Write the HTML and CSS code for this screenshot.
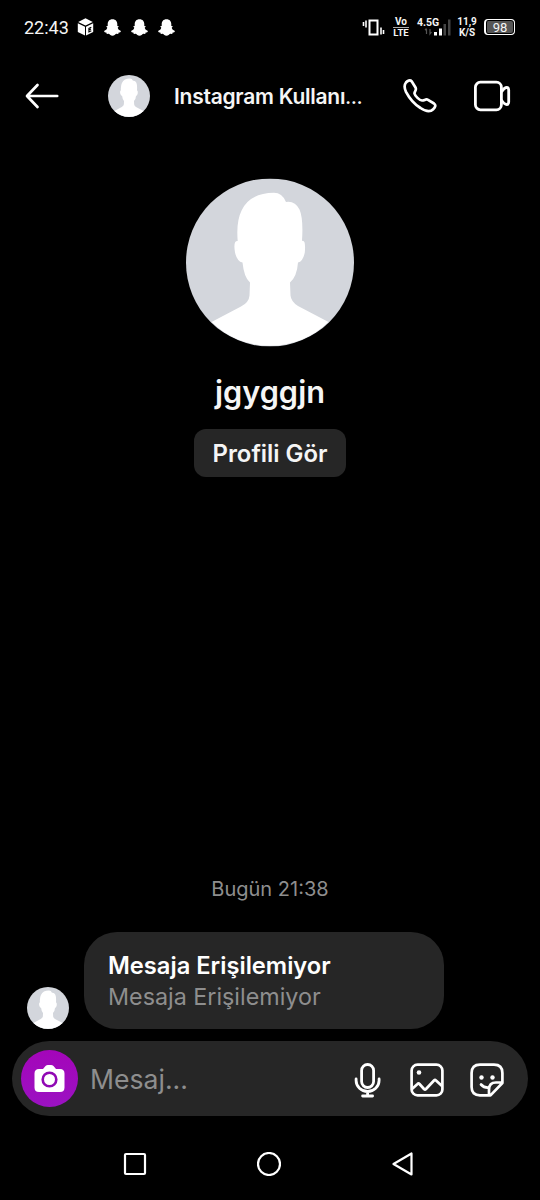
FILE: index.html
```html
<!DOCTYPE html>
<html lang="tr">
<head>
<meta charset="utf-8">
<title>Mesajlar</title>
<link rel="stylesheet" href="styles.css">
</head>
<body>
<svg class="defs" width="0" height="0">
  <symbol id="avatar" viewBox="0 0 168 168">
    <circle cx="84" cy="84" r="84" fill="#d3d6dc"/>
    <path fill="#fff" d="M25.500 143.600 55 128Q63 124 63.500 117L64 104Q58 99 56.500 84Q51 83 49 74Q47 62 51.700 62.500Q50 43 55.700 31.700Q64 14.500 88 14.300Q96 14.300 100 23.400Q109 22 113.500 31Q117.500 40 116 62.500Q120 61 118.800 74Q117 83 112 84Q111 98 104 104L104.500 117Q105 123 112 127.500L142.500 143.600A84 84 0 0 1 25.500 143.600Z"/>
  </symbol>
  <symbol id="ghost" viewBox="0 0 17 17">
    <path fill="#fff" d="M8.500.2C11.800.2 13.300 2.500 13.300 5v2l1.600.2-1.200 1.600c.4 1.600 1.400 2.500 3.200 3.100-.1 1.100-1 1.500-2.200 1.700l-.5 1.300-2-.1c-1 .5-1.900 1.900-3.700 1.900s-2.700-1.400-3.700-1.900l-2 .1-.5-1.300C1.100 13.400.2 13 .1 11.900c1.800-.6 2.800-1.500 3.200-3.100L2.100 7.200 3.700 7V5C3.700 2.500 5.200.2 8.500.2z"/>
  </symbol>
</svg>
<div class="phone">
  <div class="status">
    <span class="clock">22:43</span>
    <svg class="cube" width="17" height="18" viewBox="0 0 17 18"><path fill="#fff" d="M8.500.3 15.800 4 8.500 7.600 1.200 4zM.8 5.200 8 8.800V17.500L.8 14zM16.200 5.200 9 8.800V17.500l7.200-3.500z"/><path d="M14.300 9.300l-2.400 1.100v3.500l2.400-1.200M12 12l2-1" fill="none" stroke="#000" stroke-width="1.100"/></svg>
    <svg class="ghost" width="17" height="17"><use href="#ghost"/></svg>
    <svg class="ghost" width="17" height="17"><use href="#ghost"/></svg>
    <svg class="ghost" width="17" height="17"><use href="#ghost"/></svg>
    <div class="system">
      <svg width="23" height="17" viewBox="0 0 23 17"><path d="M7.500 1.500h8v14h-8z" fill="none" stroke="#fff" stroke-width="2"/><path d="M1.500 3v4M4 1.500v7M19 8.500v7M21.500 11v4" stroke="#fff" stroke-width="1.600"/></svg>
      <div class="stack volte"><span>Vo</span><span class="lte">LTE</span></div>
      <div class="signal">
        <span>4.5G</span>
        <svg width="35" height="18" viewBox="0 0 35 18"><path d="M10.500 11v5m-1.500-4 1.500-1.500M14 11v5l1.500-2" stroke="#555" stroke-width="1.200" fill="none"/><path d="M18 14h3v3.500h-3zM23 10.500h3v7h-3z" fill="#fff"/><path d="M27.500 6h2.500v11.500h-2.500zM32 1.500h2.500v16H32z" fill="#444"/></svg>
      </div>
      <div class="stack speed"><span>11,9</span><span>K/S</span></div>
      <div class="battery"><span>98</span></div>
    </div>
  </div>

  <header class="header">
    <svg class="back" width="36" height="26" viewBox="0 0 36 26" fill="none" stroke="#fff" stroke-width="2.700" stroke-linecap="round" stroke-linejoin="round"><path d="M13.500 2 3 13l10.500 11M3.500 13H33.200"/></svg>
    <svg class="avatar-small" width="42" height="42"><use href="#avatar"/></svg>
    <h1 class="title"><span>Instagram Kullanı</span><span class="dots">…</span></h1>
    <svg class="call" width="36" height="36" viewBox="0 0 36 36" fill="none" stroke="#fff" stroke-width="2.700" stroke-linejoin="round"><path d="M4 4.500C5.500 2.800 8 1.500 9.800 3.500L13.500 9.500C15 12 12.300 13.300 12.500 15.500C13 18 17.500 22.300 20 22.500C22.500 22.800 23.600 20.400 26 21.800L32 25.500C34.400 27.200 33 29.500 31.200 31.200C28.500 34 23.500 33.400 18.500 30C12.500 26.200 7.500 20.500 4 13.800C2.200 10 2 7 4 4.500Z"/></svg>
    <svg class="video" width="38" height="32" viewBox="0 0 38 32" fill="none" stroke="#fff" stroke-width="2.800" stroke-linejoin="round"><rect x="2.400" y="2.200" width="26" height="27.600" rx="5"/><path d="M28.400 12C30 9.500 31.600 7.500 33.800 7.500Q35.700 7.500 35.700 10v12Q35.700 24.500 33.800 24.500C31.600 24.500 30 22.500 28.400 20"/></svg>
  </header>

  <main class="thread">
    <section class="profile">
      <svg width="168" height="168" viewBox="0 -.5 168 168" overflow="visible"><use href="#avatar" width="168" height="168"/></svg>
      <h2 class="name"><span>jgyggjn</span></h2>
      <button class="view"><span>Profili Gör</span></button>
    </section>
    <div class="date"><span>Bugün 21:38</span></div>
    <div class="message">
      <svg width="42" height="42"><use href="#avatar"/></svg>
      <div class="bubble">
        <strong><span>Mesaja Erişilemiyor</span></strong>
        <p><span>Mesaja Erişilemiyor</span></p>
      </div>
    </div>
  </main>

  <div class="composer">
    <div class="camera">
      <svg width="31" height="29" viewBox="0 0 31 29"><path fill="#fff" d="M5 5h4l2.500-3Q12.500 1 14 1h3q1.500 0 2.500 1L22 5h4q4.500 0 4.500 4.500v14q0 4.500-4.500 4.500H5Q.5 28 .5 23.500v-14Q.5 5 5 5z"/><circle cx="15.500" cy="15.500" r="6.800" fill="none" stroke="#9009b4" stroke-width="2.600"/></svg>
    </div>
    <span class="placeholder">Mesaj...</span>
    <svg class="mic" width="28" height="36" viewBox="0 0 28 36" fill="none" stroke="#fff" stroke-width="2.800" stroke-linecap="round"><rect x="7.600" y="2.500" width="12" height="23" rx="6"/><path d="M2.100 17v1.500a11.500 11 0 0 0 23 0V17M13.600 29.500V34M8.600 34h10"/></svg>
    <svg class="photo" width="34" height="34" viewBox="0 0 34 34" fill="none" stroke="#fff" stroke-width="2.700" stroke-linejoin="round"><rect x="1.600" y="1.600" width="30.800" height="30.800" rx="6"/><path d="M2 26 7.500 21Q8.500 20 9.500 21L14 26Q15 27 16 26L24 17.500Q25 16.500 26 17.500L32 23"/><circle cx="9" cy="9.500" r="2.300" fill="#fff" stroke="none"/></svg>
    <svg class="sticker" width="34" height="34" viewBox="0 0 34 34" fill="none" stroke="#fff" stroke-width="2.700" stroke-linejoin="round" stroke-linecap="round"><path d="M19 32.400H10Q1.600 32.400 1.600 24V10Q1.600 1.600 10 1.600h14Q32.400 1.600 32.400 10v10L20.500 32.400H19V26.500Q19 19.500 26 19.500h6M11 21.500q3 3.500 8 3"/><circle cx="11.500" cy="14.500" r="2.200" fill="#fff" stroke="none"/><circle cx="22.500" cy="14.500" r="2.200" fill="#fff" stroke="none"/></svg>
  </div>

  <nav class="nav">
    <svg width="24" height="24" viewBox="0 0 24 24"><rect x="2" y="2" width="20" height="20" rx="1"/></svg>
    <svg width="24" height="24" viewBox="0 0 24 24"><circle cx="12" cy="12" r="11"/></svg>
    <svg width="24" height="24" viewBox="0 0 24 24"><path d="M20.500 1.500v21L2.500 12z"/></svg>
  </nav>
</div>
</body>
</html>
```
FILE: styles.css
```css
* { box-sizing: border-box; margin: 0; }
body { background: #000; color: #f5f5f5; font-family: Inter, "Noto Sans", sans-serif; }
svg { display: block; flex: none; }
.defs { position: absolute; }
.phone { width: 540px; height: 1200px; display: flex; flex-direction: column; background: #000; overflow: hidden; white-space: nowrap; }

.status { height: 54px; padding: 0 25px 0 24px; display: flex; align-items: center; font-family: Roboto, sans-serif; flex: none; }
.clock { width: 52.500px; padding-top: 1px; font-size: 18px; line-height: 22px; }
.ghost { margin-left: 10px; }
.system { margin-left: auto; display: flex; align-items: center; height: 22px; font-weight: 700; }
.stack { display: flex; flex-direction: column; align-items: center; font-size: 10px; line-height: 10px; }
.volte { margin-left: 8px; width: 16px; }
.lte { border-top: 1px solid #aaa; line-height: 10px; font-size: 9.500px; }
.signal { margin-left: 7px; width: 35px; height: 18px; display: grid; font-size: 10.500px; line-height: 10px; }
.signal > * { grid-area: 1 / 1; }
.signal span { padding-left: 1px; }
.speed { margin-left: 6px; width: 20px; font-size: 10px; line-height: 11px; }
.battery { margin-left: 7px; width: 31px; height: 16px; border: 1px solid #fff; border-left-width: 2px; border-radius: 4px; background: #555; box-shadow: inset 0 0 0 1px #000; font-size: 13px; line-height: 15px; font-weight: 400; text-align: center; }

.header { height: 84px; padding-left: 24px; display: flex; align-items: center; flex: none; }
.avatar-small { margin-left: 48px; }
.title { margin-left: 24px; width: 228px; padding-top: 2px; font-size: 21px; line-height: 28px; font-weight: 600; letter-spacing: -0.260px; }
.dots { letter-spacing: 0; font-size: 18px; }
.video { margin-left: 35px; }

.thread { flex: 1; display: flex; flex-direction: column; padding-top: 40px; }
.profile { display: flex; flex-direction: column; align-items: center; }
.name { margin-top: 26px; height: 40px; line-height: 40px; font-size: 30.700px; font-weight: 600; }
.view { margin-top: 17px; width: 152px; height: 48px; border: 0; padding: 1px 0 0; border-radius: 12px; background: #262626; color: #f5f5f5; font: 600 23.900px/47px Inter, sans-serif; }
.date { margin-top: auto; text-align: center; font-size: 20px; line-height: 28px; color: #8e8e8e; }
.message { margin: 29px 0 12px 27px; display: flex; align-items: flex-end; gap: 15px; }
.bubble { width: 360px; height: 97px; border-radius: 33px; background: #262626; padding: 18px 24px; }
.bubble strong { display: block; font-size: 23.700px; line-height: 31px; font-weight: 600; color: #fff; }
.bubble p { font-size: 23.300px; line-height: 31px; color: #8e8e8e; }

.composer { flex: none; margin: 0 12px; height: 75px; border-radius: 38px; background: #262626; display: flex; align-items: center; padding-left: 9px; }
.camera { width: 57px; height: 57px; border-radius: 50%; background: linear-gradient(#a405b9, #9b12c2); display: flex; align-items: center; justify-content: center; }
.placeholder { margin-left: 12px; width: 264px; padding-top: 1px; font-size: 26.600px; line-height: 36px; color: #8e8e8e; }
.mic, .photo, .sticker { margin-top: 2px; }
.photo { margin-left: 28px; }
.sticker { margin-left: 26px; }

.nav { height: 84px; flex: none; padding: 36px 125px 0 123px; display: flex; justify-content: space-between; fill: none; stroke: #fff; stroke-width: 2.200; stroke-linejoin: round; }
```
